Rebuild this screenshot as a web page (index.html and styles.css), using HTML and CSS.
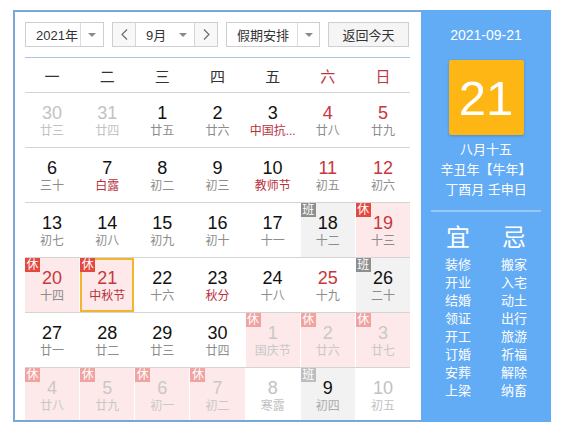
FILE: index.html
```html
<!DOCTYPE html>
<html lang="zh-CN">
<head>
<meta charset="utf-8">
<title>万年历</title>
<link rel="stylesheet" href="styles.css">
</head>
<body>
<div class="cal">
  <div class="main">
    <div class="toolbar">
      <div class="sel sel-year"><span class="sel-text">2021年</span><span class="sel-arrow"><i class="tri"></i></span></div>
      <div class="month-group">
        <span class="nav-btn"><svg width="7" height="11" viewBox="0 0 7 11"><polyline points="6,0.5 1,5.5 6,10.5" fill="none" stroke="#666" stroke-width="1.1"/></svg></span>
        <span class="month-sel"><span class="sel-text">9月</span><i class="tri"></i></span>
        <span class="nav-btn"><svg width="7" height="11" viewBox="0 0 7 11"><polyline points="1,0.5 6,5.5 1,10.5" fill="none" stroke="#666" stroke-width="1.1"/></svg></span>
      </div>
      <div class="sel sel-holiday"><span class="sel-text">假期安排</span><span class="sel-arrow"><i class="tri"></i></span></div>
      <button class="today-btn">返回今天</button>
    </div>
    <div class="weekdays">
      <span>一</span><span>二</span><span>三</span><span>四</span><span>五</span><span class="wk-red">六</span><span class="wk-red">日</span>
    </div>
    <div class="weeks">
      <div class="week">
        <div class="cell other"><span class="num">30</span><span class="lunar">廿三</span></div>
        <div class="cell other"><span class="num">31</span><span class="lunar">廿四</span></div>
        <div class="cell"><span class="num">1</span><span class="lunar">廿五</span></div>
        <div class="cell"><span class="num">2</span><span class="lunar">廿六</span></div>
        <div class="cell"><span class="num">3</span><span class="lunar fest">中国抗...</span></div>
        <div class="cell red"><span class="num">4</span><span class="lunar">廿八</span></div>
        <div class="cell red"><span class="num">5</span><span class="lunar">廿九</span></div>
      </div>
      <div class="week">
        <div class="cell"><span class="num">6</span><span class="lunar">三十</span></div>
        <div class="cell"><span class="num">7</span><span class="lunar fest">白露</span></div>
        <div class="cell"><span class="num">8</span><span class="lunar">初二</span></div>
        <div class="cell"><span class="num">9</span><span class="lunar">初三</span></div>
        <div class="cell"><span class="num">10</span><span class="lunar fest">教师节</span></div>
        <div class="cell red"><span class="num">11</span><span class="lunar">初五</span></div>
        <div class="cell red"><span class="num">12</span><span class="lunar">初六</span></div>
      </div>
      <div class="week">
        <div class="cell"><span class="num">13</span><span class="lunar">初七</span></div>
        <div class="cell"><span class="num">14</span><span class="lunar">初八</span></div>
        <div class="cell"><span class="num">15</span><span class="lunar">初九</span></div>
        <div class="cell"><span class="num">16</span><span class="lunar">初十</span></div>
        <div class="cell"><span class="num">17</span><span class="lunar">十一</span></div>
        <div class="cell work"><span class="badge badge-work">班</span><span class="num">18</span><span class="lunar">十二</span></div>
        <div class="cell rest red"><span class="badge badge-rest">休</span><span class="num">19</span><span class="lunar">十三</span></div>
      </div>
      <div class="week">
        <div class="cell rest red"><span class="badge badge-rest">休</span><span class="num">20</span><span class="lunar">十四</span></div>
        <div class="cell rest red selected"><span class="badge badge-rest">休</span><span class="num">21</span><span class="lunar fest">中秋节</span></div>
        <div class="cell"><span class="num">22</span><span class="lunar">十六</span></div>
        <div class="cell"><span class="num">23</span><span class="lunar fest">秋分</span></div>
        <div class="cell"><span class="num">24</span><span class="lunar">十八</span></div>
        <div class="cell red"><span class="num">25</span><span class="lunar">十九</span></div>
        <div class="cell work"><span class="badge badge-work">班</span><span class="num">26</span><span class="lunar">二十</span></div>
      </div>
      <div class="week">
        <div class="cell"><span class="num">27</span><span class="lunar">廿一</span></div>
        <div class="cell"><span class="num">28</span><span class="lunar">廿二</span></div>
        <div class="cell"><span class="num">29</span><span class="lunar">廿三</span></div>
        <div class="cell"><span class="num">30</span><span class="lunar">廿四</span></div>
        <div class="cell rest other"><span class="badge badge-rest faded">休</span><span class="num">1</span><span class="lunar">国庆节</span></div>
        <div class="cell rest other"><span class="badge badge-rest faded">休</span><span class="num">2</span><span class="lunar">廿六</span></div>
        <div class="cell rest other"><span class="badge badge-rest faded">休</span><span class="num">3</span><span class="lunar">廿七</span></div>
      </div>
      <div class="week">
        <div class="cell rest other"><span class="badge badge-rest faded">休</span><span class="num">4</span><span class="lunar">廿八</span></div>
        <div class="cell rest other"><span class="badge badge-rest faded">休</span><span class="num">5</span><span class="lunar">廿九</span></div>
        <div class="cell rest other"><span class="badge badge-rest faded">休</span><span class="num">6</span><span class="lunar">初一</span></div>
        <div class="cell rest other"><span class="badge badge-rest faded">休</span><span class="num">7</span><span class="lunar">初二</span></div>
        <div class="cell other"><span class="num">8</span><span class="lunar">寒露</span></div>
        <div class="cell work other dark-num"><span class="badge badge-work faded">班</span><span class="num">9</span><span class="lunar">初四</span></div>
        <div class="cell other"><span class="num">10</span><span class="lunar">初五</span></div>
      </div>
    </div>
  </div>
  <div class="side">
    <div class="side-date">2021-09-21</div>
    <div class="day-box">21</div>
    <div class="lunar-info">
      <div>八月十五</div>
      <div>辛丑年【牛年】</div>
      <div>丁酉月 壬申日</div>
    </div>
    <div class="side-divider"></div>
    <div class="yiji">
      <div class="yiji-col">
        <div class="yiji-title">宜</div>
        <div>装修</div><div>开业</div><div>结婚</div><div>领证</div><div>开工</div><div>订婚</div><div>安葬</div><div>上梁</div>
      </div>
      <div class="yiji-col">
        <div class="yiji-title">忌</div>
        <div>搬家</div><div>入宅</div><div>动土</div><div>出行</div><div>旅游</div><div>祈福</div><div>解除</div><div>纳畜</div>
      </div>
    </div>
  </div>
</div>
</body>
</html>
```

FILE: styles.css
```css
* { box-sizing: border-box; }

body {
  margin: 0;
  padding: 10px 0 0 13px;
  background: #fff;
  font-family: "Liberation Sans", "Noto Sans CJK SC", sans-serif;
  color: #000;
}

.cal {
  display: flex;
  width: 538px;
  height: 412px;
}

.main {
  width: 408px;
  height: 412px;
  border: 2px solid #79a8d2;
  border-right: none;
  padding: 10px 11px 0 10px;
  overflow: hidden;
}

/* toolbar */
.toolbar {
  display: flex;
  gap: 8px;
  height: 25px;
}

.sel {
  display: flex;
  border: 1px solid #cfcfcf;
  background: #fff;
  font-size: 13px;
  color: #333;
}

.sel-text {
  display: flex;
  align-items: center;
  padding-left: 10px;
}

.sel-year { width: 79px; }
.sel-year .sel-text { width: 54px; }

.sel-holiday { width: 94px; }
.sel-holiday .sel-text { width: 70px; }

.sel-arrow {
  flex: 1;
  display: flex;
  align-items: center;
  justify-content: center;
  border-left: 1px solid #dcdcdc;
}

.tri {
  display: block;
  width: 0;
  height: 0;
  border-left: 4px solid transparent;
  border-right: 4px solid transparent;
  border-top: 4px solid #8a8a8a;
}

.month-group {
  display: flex;
  width: 106px;
  border: 1px solid #cfcfcf;
  font-size: 13px;
  color: #333;
}

.nav-btn {
  width: 23px;
  display: flex;
  align-items: center;
  justify-content: center;
  background: #f8f8f8;
}

.month-group .nav-btn:first-child { border-right: 1px solid #d6d6d6; }
.month-group .nav-btn:last-child { border-left: 1px solid #d6d6d6; }

.month-sel {
  flex: 1;
  display: flex;
  align-items: center;
  justify-content: space-between;
  padding-right: 7px;
}

.today-btn {
  width: 81px;
  height: 25px;
  margin: 0;
  padding: 0;
  border: 1px solid #cfcfcf;
  background: #f5f5f5;
  font-family: inherit;
  font-size: 13px;
  color: #333;
}

/* weekdays */
.weekdays {
  display: grid;
  grid-template-columns: repeat(7, 1fr);
  column-gap: 1px;
  height: 35px;
  margin-top: 10px;
  border-top: 1px solid #a9c7e2;
  align-items: center;
  text-align: center;
  font-size: 15px;
  color: #333;
}

.weekdays .wk-red { color: #bb3744; }

/* weeks */
.week {
  display: grid;
  grid-template-columns: repeat(7, 1fr);
  column-gap: 1px;
  height: 55px;
  border-top: 1px solid #d4d4d4;
}

.cell {
  position: relative;
  display: flex;
  flex-direction: column;
  align-items: center;
  padding-top: 10px;
}

.num {
  font-size: 18px;
  line-height: 20px;
  color: #111;
}

.lunar {
  font-size: 12px;
  line-height: 17px;
  color: #8c8c8c;
  white-space: nowrap;
}

.lunar.fest { color: #b8323c; }

.cell.red .num { color: #c8363e; }

.cell.rest { background: #fde9e9; }
.cell.work { background: #f2f2f2; }

.cell.other .num,
.cell.other .lunar { color: #c2c2c2; }

.cell.rest.other .num,
.cell.rest.other .lunar { color: #c8c8c8; }

.cell.dark-num .num { color: #111; }
.cell.dark-num .lunar { color: #aaa; }

.cell.selected {
  border: 2px solid #f2b52e;
  padding-top: 8px;
}

.badge {
  position: absolute;
  left: 0;
  top: 0;
  width: 15px;
  height: 14px;
  font-size: 12px;
  line-height: 14px;
  text-align: center;
  color: #fff;
}

.cell.selected .badge { left: -2px; top: -2px; }

.badge-rest { background: #e4493f; }
.badge-work { background: #8e8e8e; }
.badge-rest.faded { background: #f0a3a0; }
.badge-work.faded { background: #bdbdbd; }

/* side panel */
.side {
  width: 130px;
  height: 412px;
  background: #62abf5;
  color: #fff;
  display: flex;
  flex-direction: column;
  align-items: center;
  padding-top: 15px;
}

.side-date {
  font-size: 14px;
  line-height: 20px;
}

.day-box {
  width: 75px;
  height: 75px;
  margin-top: 15px;
  background: #fdb614;
  border-radius: 2px;
  box-shadow: 0 1px 3px rgba(0, 0, 0, 0.18);
  display: flex;
  align-items: center;
  justify-content: center;
  font-size: 49px;
  color: #fff;
}

.lunar-info {
  margin-top: 5px;
  font-size: 13px;
  line-height: 20px;
  text-align: center;
}

.side-divider {
  width: 110px;
  height: 2px;
  margin-top: 10px;
  background: rgba(255, 255, 255, 0.35);
}

.yiji {
  display: flex;
  margin-top: 12px;
}

.yiji-col {
  width: 56px;
  display: flex;
  flex-direction: column;
  align-items: center;
  font-size: 13px;
  line-height: 18px;
}

.yiji-title {
  font-size: 24px;
  line-height: 28px;
  margin-bottom: 4px;
}
```
